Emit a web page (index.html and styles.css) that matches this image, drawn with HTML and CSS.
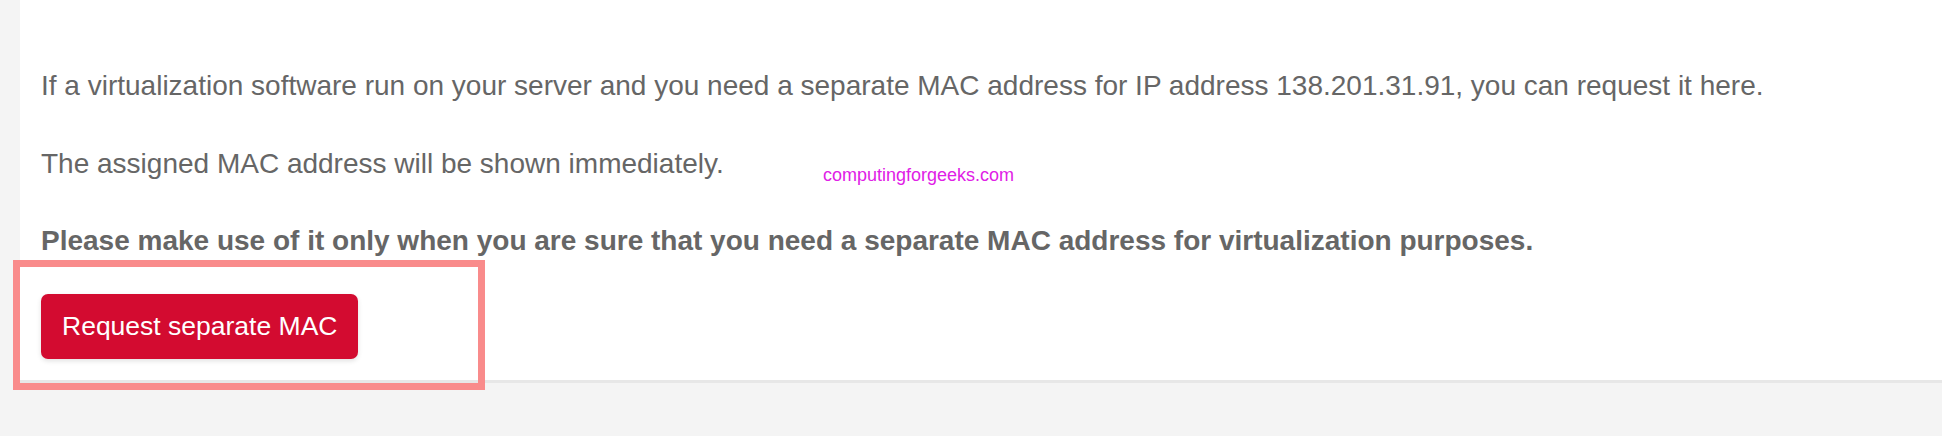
FILE: index.html
```html
<!DOCTYPE html>
<html lang="en">
<head>
<meta charset="utf-8">
<title>Request separate MAC</title>
<link rel="stylesheet" href="styles.css">
</head>
<body>
<main class="card">
  <p class="text">If a virtualization software run on your server and you need a separate MAC address for IP address 138.201.31.91, you can request it here.</p>
  <p class="text">The assigned MAC address will be shown immediately.</p>
  <p class="text strong">Please make use of it only when you are sure that you need a separate MAC address for virtualization purposes.</p>
  <div class="actions">
    <button class="btn" type="button">Request separate MAC</button>
  </div>
</main>
<div class="watermark">computingforgeeks.com</div>
<div class="highlight"></div>
</body>
</html>
```
FILE: styles.css
```css
html, body {
  margin: 0;
  padding: 0;
}
body {
  background: #f4f4f4;
  font-family: "Liberation Sans", Arial, sans-serif;
  color: #666666;
  overflow: hidden;
  width: 1942px;
  height: 436px;
  position: relative;
}
.card {
  margin-left: 20px;
  background: #ffffff;
  padding: 66px 0 21px 21px;
  display: flex;
  flex-direction: column;
  gap: 37.5px;
  box-shadow: 0 3px 0 #e7e7e7;
}
.text {
  margin: 0;
  font-size: 28px;
  line-height: 40px;
}
.strong {
  font-weight: bold;
}
.actions {
  display: flex;
  margin-top: -5px;
}
.btn {
  font-family: "Liberation Sans", Arial, sans-serif;
  font-size: 26.5px;
  color: #ffffff;
  background: #d30b30;
  border: none;
  border-radius: 7px;
  height: 65px;
  padding: 0 21px;
  box-shadow: 0 2px 5px rgba(0, 0, 0, 0.12);
}
.watermark {
  position: absolute;
  left: 823px;
  top: 165px;
  font-family: "Liberation Sans", Arial, sans-serif;
  font-size: 18px;
  color: #e020e6;
}
.highlight {
  position: absolute;
  left: 13px;
  top: 260px;
  width: 458px;
  height: 116px;
  border: 7px solid #f98b8b;
}
```
